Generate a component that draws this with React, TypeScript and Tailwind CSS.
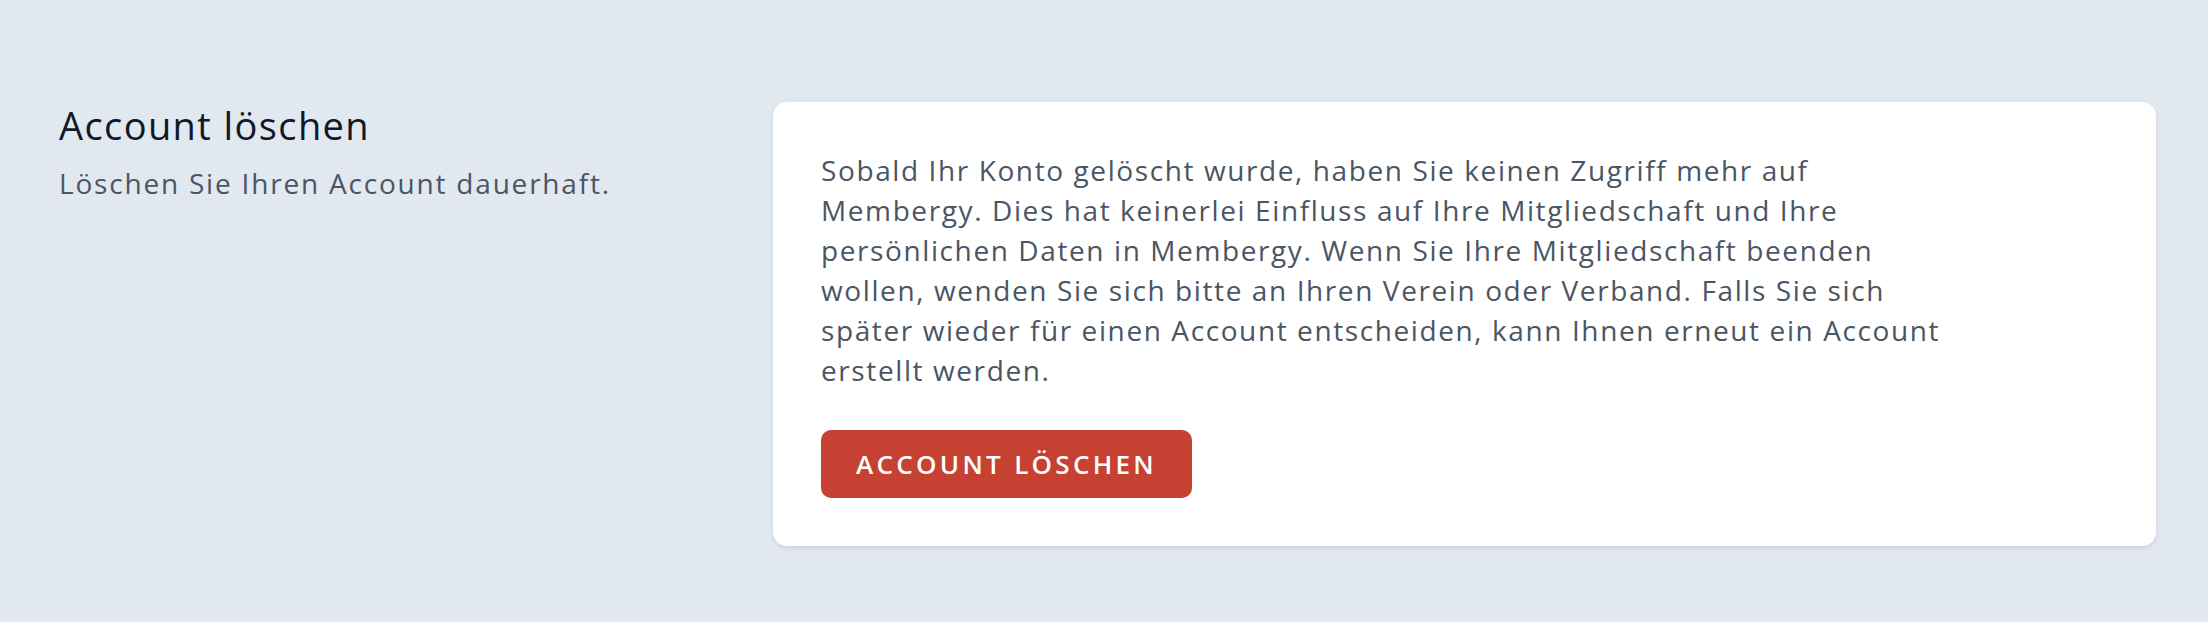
import React from "react";

const bodyLines = [
  "Sobald Ihr Konto gelöscht wurde, haben Sie keinen Zugriff mehr auf",
  "Membergy. Dies hat keinerlei Einfluss auf Ihre Mitgliedschaft und Ihre",
  "persönlichen Daten in Membergy. Wenn Sie Ihre Mitgliedschaft beenden",
  "wollen, wenden Sie sich bitte an Ihren Verein oder Verband. Falls Sie sich",
  "später wieder für einen Account entscheiden, kann Ihnen erneut ein Account",
  "erstellt werden.",
];

export default function App() {
  return (
    <div
      className="min-h-[622px] w-full bg-[#e2e8f0]"
      style={{ fontFamily: '"Open Sans", "Noto Sans", sans-serif' }}
    >
      <div className="pl-[59px] pr-[52px] pt-[35px]">
        <div className="border-t border-[#e6e8ee]" />
        <div className="mt-[66px] grid grid-cols-[669px_1fr] gap-[45px]">
          <div>
            <h3 className="text-[38px] leading-[47px] font-normal text-[#111827] tracking-[1.4px]">
              Account löschen
            </h3>
            <p className="mt-[14px] text-[28px] leading-[40px] text-[#4b5563] tracking-[1.8px]">
              Löschen Sie Ihren Account dauerhaft.
            </p>
          </div>
          <div className="rounded-[14px] bg-white px-[48px] pt-[48px] pb-[48px] shadow-[0_2px_4px_rgba(15,23,42,0.10)]">
            <div className="text-[28px] leading-[40px] text-[#4b5563] tracking-[1.6px]">
              {bodyLines.map((l, i) => (
                <div key={i} className="whitespace-nowrap">
                  {l}
                </div>
              ))}
            </div>
            <button className="mt-[40px] h-[68px] rounded-[10px] bg-[#c74132] px-[35px] text-[26px] font-semibold uppercase tracking-[3.3px] text-white">
              Account löschen
            </button>
          </div>
        </div>
      </div>
    </div>
  );
}
